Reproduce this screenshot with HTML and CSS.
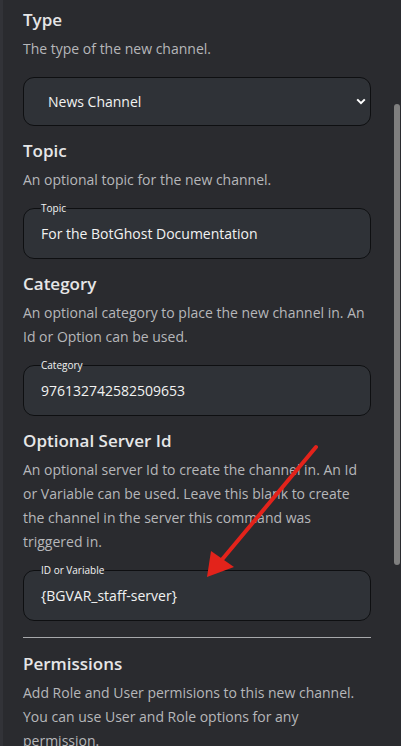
FILE: index.html
```html
<!DOCTYPE html>
<html lang="en">
<head>
<meta charset="utf-8">
<title>Create Channel Options</title>
<link rel="stylesheet" href="styles.css">
</head>
<body>
<div class="page">
  <div class="side-strip"></div>
  <main class="panel">
    <section class="option">
      <h2 class="option-title">Type</h2>
      <p class="option-desc">The type of the new channel.</p>
      <div class="select">
        <span class="select-value">News Channel</span>
        <svg class="chevron" width="10" height="7" viewBox="0 0 10 7"><path d="M1.2 1.4 L5 5.2 L8.8 1.4" fill="none" stroke="#ffffff" stroke-width="2"/></svg>
      </div>
    </section>

    <section class="option">
      <h2 class="option-title">Topic</h2>
      <p class="option-desc">An optional topic for the new channel.</p>
      <fieldset class="field">
        <legend class="field-label">Topic</legend>
        <div class="field-value">For the BotGhost Documentation</div>
      </fieldset>
    </section>

    <section class="option">
      <h2 class="option-title">Category</h2>
      <p class="option-desc">An optional category to place the new channel in. An Id or Option can be used.</p>
      <fieldset class="field">
        <legend class="field-label">Category</legend>
        <div class="field-value">976132742582509653</div>
      </fieldset>
    </section>

    <section class="option">
      <h2 class="option-title">Optional Server Id</h2>
      <p class="option-desc">An optional server Id to create the channel in. An Id or Variable can be used. Leave this blank to create the channel in the server this command was triggered in.</p>
      <fieldset class="field">
        <legend class="field-label">ID or Variable</legend>
        <div class="field-value">{BGVAR_staff-server}</div>
      </fieldset>
    </section>

    <hr class="divider">

    <section class="option">
      <h2 class="option-title">Permissions</h2>
      <p class="option-desc">Add Role and User permisions to this new channel. You can use User and Role options for any permission.</p>
    </section>
  </main>
  <div class="scroll-thumb"></div>
  <svg class="annotation" width="401" height="746" viewBox="0 0 401 746">
    <line x1="316" y1="447" x2="220" y2="562" stroke="#e3231b" stroke-width="4" stroke-linecap="round"/>
    <polygon points="207,577 211,551 234,567" fill="#e3231b"/>
  </svg>
</div>
</body>
</html>
```

FILE: styles.css
```css
* {
  box-sizing: border-box;
}

html, body {
  margin: 0;
  padding: 0;
  background: #2a2b2f;
}

body {
  font-family: "Open Sans", "Noto Sans", sans-serif;
  color: #b8b9bc;
  width: 401px;
  height: 746px;
  overflow: hidden;
}

.page {
  position: relative;
  width: 401px;
  height: 746px;
  overflow: hidden;
}

.side-strip {
  position: absolute;
  left: 0;
  top: 0;
  width: 3px;
  height: 746px;
  background: #323338;
}

.panel {
  width: 371px;
  padding: 8px 0 0 23px;
}

.option {
  display: flex;
  flex-direction: column;
}

.option + .option {
  margin-top: 13px;
}

.option-title {
  margin: 0;
  font-size: 17px;
  line-height: 24px;
  font-weight: 600;
  color: #e6e6e7;
}

.option-desc {
  margin: 5px 0 0 0;
  font-size: 14px;
  line-height: 24px;
  color: #b6b7ba;
}

.select {
  margin-top: 16px;
  height: 49px;
  border: 1px solid #0e0f11;
  border-radius: 11px;
  background: #2f3237;
  display: flex;
  align-items: center;
  justify-content: space-between;
  padding: 0 4px 0 24px;
}

.select-value {
  font-size: 14px;
  color: #f2f2f2;
}

.chevron {
  display: block;
}

.field {
  margin: 10px 0 0 0;
  height: 57px;
  border: 1px solid #0e0f11;
  border-radius: 11px;
  background: #2f3237;
  padding: 0 17px;
  min-width: 0;
}

.field-label {
  padding: 0;
  font-size: 10px;
  line-height: 12px;
  color: #f2f2f2;
}

.field-value {
  font-size: 14px;
  line-height: 20px;
  color: #f2f2f2;
  padding-top: 10px;
}

.divider {
  margin: 16px 0 0 0;
  border: none;
  height: 1px;
  background: #a7a8ab;
  width: 348px;
}

.divider + .option {
  margin-top: 14px;
}

.scroll-thumb {
  position: absolute;
  left: 394px;
  top: 104px;
  width: 6px;
  height: 461px;
  border-radius: 3px;
  background: #7f7f7f;
}

.annotation {
  position: absolute;
  left: 0;
  top: 0;
  pointer-events: none;
}
```
